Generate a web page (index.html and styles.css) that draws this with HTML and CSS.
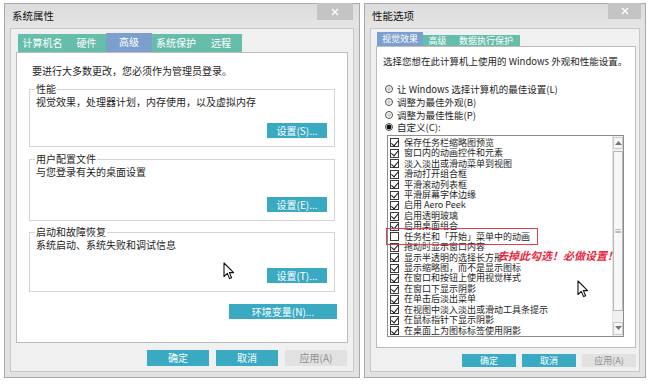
FILE: index.html
```html
<!DOCTYPE html>
<html lang="zh-CN">
<head>
<meta charset="utf-8">
<title>系统属性 / 性能选项</title>
<link rel="stylesheet" href="styles.css">
</head>
<body>
<div class="desk">
  <section class="win win-sys">
    <header class="titlebar">
      <span class="title">系统属性</span>
      <span class="close close-sys"><svg width="8" height="8" viewBox="0 0 8 8"><path d="M1 1L7 7M7 1L1 7" stroke="#fff" stroke-width="1.4"/></svg></span>
    </header>
    <div class="client">
      <nav class="tabs">
        <span class="tab t49">计算机名</span>
        <span class="tab t39">硬件</span>
        <span class="tab on t46">高级</span>
        <span class="tab t48">系统保护</span>
        <span class="tab t42">远程</span>
      </nav>
      <div class="panel panel-sys">
        <p class="intro">要进行大多数更改，您必须作为管理员登录。</p>
        <fieldset class="group first">
          <legend>性能</legend>
          <p class="desc">视觉效果，处理器计划，内存使用，以及虚拟内存</p>
          <div class="row-end"><button class="btn btn-set">设置(S)...</button></div>
        </fieldset>
        <fieldset class="group second">
          <legend>用户配置文件</legend>
          <p class="desc">与您登录有关的桌面设置</p>
          <div class="row-end"><button class="btn btn-set">设置(E)...</button></div>
        </fieldset>
        <fieldset class="group third">
          <legend>启动和故障恢复</legend>
          <p class="desc">系统启动、系统失败和调试信息</p>
          <div class="row-end"><button class="btn btn-set">设置(T)...</button></div>
        </fieldset>
        <div class="row-end env-row"><button class="btn btn-env">环境变量(N)...</button></div>
      </div>
      <div class="actions actions-sys">
        <button class="btn act">确定</button>
        <button class="btn act">取消</button>
        <button class="btn act off">应用(A)</button>
      </div>
    </div>
  </section>

  <section class="win win-perf">
    <header class="titlebar">
      <span class="title">性能选项</span>
      <span class="close close-perf"><svg width="8" height="8" viewBox="0 0 8 8"><path d="M1 1L7 7M7 1L1 7" stroke="#fff" stroke-width="1.4"/></svg></span>
    </header>
    <div class="client">
      <nav class="tabs">
        <span class="tab on p46">视觉效果</span>
        <span class="tab p29">高级</span>
        <span class="tab p68">数据执行保护</span>
      </nav>
      <div class="panel panel-perf">
        <p class="intro2">选择您想在此计算机上使用的 Windows 外观和性能设置。</p>
        <div class="radios">
          <div class="radio-row"><span class="radio"></span>让 Windows 选择计算机的最佳设置(L)</div>
          <div class="radio-row"><span class="radio"></span>调整为最佳外观(B)</div>
          <div class="radio-row"><span class="radio"></span>调整为最佳性能(P)</div>
          <div class="radio-row"><span class="radio sel"></span>自定义(C):</div>
        </div>
        <div class="listbox">
          <ul class="items">
            <li><span class="cb on"></span>保存任务栏缩略图预览</li>
            <li><span class="cb on"></span>窗口内的动画控件和元素</li>
            <li><span class="cb on"></span>淡入淡出或滑动菜单到视图</li>
            <li><span class="cb on"></span>滑动打开组合框</li>
            <li><span class="cb on"></span>平滑滚动列表框</li>
            <li><span class="cb on"></span>平滑屏幕字体边缘</li>
            <li><span class="cb on"></span>启用 Aero Peek</li>
            <li><span class="cb on"></span>启用透明玻璃</li>
            <li><span class="cb on"></span>启用桌面组合</li>
            <li><span class="cb"></span>任务栏和「开始」菜单中的动画</li>
            <li><span class="cb on"></span>拖动时显示窗口内容</li>
            <li><span class="cb on"></span>显示半透明的选择长方形</li>
            <li><span class="cb on"></span>显示缩略图，而不是显示图标</li>
            <li><span class="cb on"></span>在窗口和按钮上使用视觉样式</li>
            <li><span class="cb on"></span>在窗口下显示阴影</li>
            <li><span class="cb on"></span>在单击后淡出菜单</li>
            <li><span class="cb on"></span>在视图中淡入淡出或滑动工具条提示</li>
            <li><span class="cb on"></span>在鼠标指针下显示阴影</li>
            <li><span class="cb on"></span>在桌面上为图标标签使用阴影</li>
          </ul>
          <div class="scrollbar">
            <span class="sb-arrow up"><svg width="7" height="4" viewBox="0 0 7 4"><path d="M0 4L3.5 0L7 4Z" fill="#777"/></svg></span>
            <span class="sb-thumb">≡</span>
            <span class="sb-space"></span>
            <span class="sb-arrow down"><svg width="7" height="4" viewBox="0 0 7 4"><path d="M0 0L3.5 4L7 0Z" fill="#777"/></svg></span>
          </div>
          <span class="mark-box"></span>
          <span class="mark-note">去掉此勾选！必做设置！</span>
        </div>
      </div>
      <div class="actions actions-perf">
        <button class="btn act2">确定</button>
        <button class="btn act2">取消</button>
        <button class="btn act2 off">应用(A)</button>
      </div>
    </div>
  </section>

  <svg class="cursor cur-left" width="12" height="18" viewBox="0 0 12 18"><path d="M1 1L1 14.5L4.3 11.4L6.6 16.6L8.6 15.7L6.4 10.6L10.6 10.6Z" fill="#fff" stroke="#111" stroke-width="1.1" stroke-linejoin="round"/></svg>
  <svg class="cursor cur-right" width="12" height="18" viewBox="0 0 12 18"><path d="M1 1L1 14.5L4.3 11.4L6.6 16.6L8.6 15.7L6.4 10.6L10.6 10.6Z" fill="#fff" stroke="#111" stroke-width="1.1" stroke-linejoin="round"/></svg>
</div>
</body>
</html>
```

FILE: styles.css
```css
* { box-sizing: border-box; }
html, body { margin: 0; padding: 0; }
body {
  background: #fff;
  font-family: "Noto Sans CJK SC", "Noto Sans", sans-serif;
  color: #1e1e1e;
  width: 651px;
  height: 385px;
  overflow: hidden;
}
p { margin: 0; }

.desk {
  position: relative;
  display: flex;
  align-items: flex-start;
  gap: 4px;
  padding: 3px 0 0 4px;
  height: 385px;
}

.win {
  display: flex;
  flex-direction: column;
  height: 375px;
  border: 1px solid #a9a9a9;
  background: #e2e2e2;
}
.win-sys { width: 356px; }
.win-perf { width: 282px; }

.titlebar {
  flex: none;
  height: 24px;
  display: flex;
  justify-content: space-between;
  align-items: flex-start;
  padding-left: 7px;
  background: linear-gradient(#dcdcdc, #e5e5e5);
}
.title {
  align-self: center;
  font-size: 10.5px;
  line-height: 14px;
  color: #111;
}
.close {
  display: flex;
  align-items: center;
  justify-content: center;
  margin-top: -1px;
  background: #c4c4c4;
}
.close-sys { width: 36px; height: 17px; margin-right: 6px; }
.close-perf { width: 33px; height: 16px; margin-right: 4px; }

.client {
  flex: 1;
  display: flex;
  flex-direction: column;
  margin: 0 5px 5px;
  border: 1px solid #c8c8c8;
  background: #f0f0f0;
}
.win-sys .client { padding: 4px 0 5px; }
.win-perf .client { padding: 3px 0 4px; }

.tabs {
  display: flex;
  align-items: flex-end;
  flex: none;
}
.win-sys .tabs { height: 19px; padding-left: 7px; }
.win-perf .tabs { height: 14px; padding-left: 6px; }

.tab {
  background: #66bdaa;
  color: #fff;
  text-align: center;
  white-space: nowrap;
}
.tab.on { background: #7c9fcd; }
.win-sys .tab { height: 18px; font-size: 10px; line-height: 18px; }
.win-sys .tab.on { height: 19px; line-height: 18px; }
.win-perf .tab { height: 11px; font-size: 9px; line-height: 11px; }
.win-perf .tab.on { height: 14px; line-height: 13px; }
.t49 { width: 49px; }
.t39 { width: 39px; }
.t46 { width: 46px; }
.t48 { width: 48px; }
.t42 { width: 42px; }
.p46 { width: 46px; }
.p29 { width: 29px; }
.p68 { width: 68px; }

.panel {
  flex: none;
  background: #fff;
  border: 1px solid #bcbcbc;
}
.panel-sys {
  height: 291px;
  margin: 0 5px;
  padding: 12px 12px 0 12px;
}
.panel-perf {
  height: 302px;
  margin: 0 3px 0 5px;
  padding: 8px 0 0 6px;
  position: relative;
}

.intro {
  padding-left: 3px;
  font-size: 10px;
  line-height: 12px;
}

.group {
  margin: 7px 0 0;
  padding: 0 7px 8px 6px;
  border: 1px solid #d4d4d4;
  min-width: 0;
}
.group.third { margin-top: 6px; }
.group legend {
  padding: 0 1px;
  margin-left: -1px;
  font-size: 10px;
  line-height: 10px;
}
.desc {
  padding-top: 2px;
  font-size: 10px;
  line-height: 12px;
}
.row-end {
  display: flex;
  justify-content: flex-end;
}
.group.first .row-end { margin-top: 15px; }
.group.second .row-end { margin-top: 19px; }
.group.third .row-end { margin-top: 17px; }
.env-row { margin-top: 12px; margin-right: -2px; }

.btn {
  border: none;
  padding: 0;
  margin: 0;
  background: #3aaac3;
  color: #fff;
  font-family: inherit;
  text-align: center;
  white-space: nowrap;
}
.btn-set { width: 60px; height: 15px; font-size: 10px; line-height: 15px; }
.btn-env { width: 108px; height: 15px; font-size: 10px; line-height: 15px; }

.actions {
  display: flex;
  justify-content: flex-end;
  flex: none;
}
.actions-sys { margin-top: 7px; padding-right: 6px; gap: 7px; }
.actions-perf { margin-top: 6px; padding-right: 3px; gap: 6px; }
.act { width: 62px; height: 16px; font-size: 10px; line-height: 16px; }
.act2 { width: 54px; height: 13px; font-size: 9px; line-height: 13px; }
.btn.off { background: #e1e1e1; color: #8e8e8e; }

/* performance options */
.intro2 {
  font-size: 9.5px;
  line-height: 12px;
}
.radios {
  margin-top: 16px;
  padding-left: 2px;
}
.radio-row {
  display: flex;
  align-items: center;
  height: 12.7px;
  font-size: 9.5px;
  line-height: 12px;
  white-space: nowrap;
}
.radio {
  width: 8px;
  height: 8px;
  margin-right: 4px;
  border-radius: 50%;
  border: 1.5px solid #4d4d4d;
  background: radial-gradient(circle, #cfcfcf 0 1.5px, #fff 2px);
  flex: none;
}
.radio.sel { background: radial-gradient(circle, #111 0 2.2px, #fff 2.7px); }

.listbox {
  position: relative;
  display: flex;
  width: 237px;
  height: 202px;
  margin: 1px 0 0 4px;
  border: 1px solid #8a8d93;
  background: #fff;
}
.items {
  flex: 1;
  list-style: none;
  margin: 0;
  padding: 2px 0 0 2px;
}
.items li {
  display: flex;
  align-items: center;
  height: 10.45px;
  font-size: 9px;
  line-height: 10.45px;
  white-space: nowrap;
}
.cb {
  position: relative;
  flex: none;
  width: 9px;
  height: 9px;
  margin-right: 5px;
  border: 1px solid #3a3a3a;
  background: #fff;
}
.cb.on::after {
  content: "";
  position: absolute;
  left: 2px;
  top: -0.5px;
  width: 3px;
  height: 5.5px;
  border: solid #111;
  border-width: 0 1.6px 1.6px 0;
  transform: rotate(40deg);
}

.scrollbar {
  flex: none;
  width: 11px;
  display: flex;
  flex-direction: column;
  background: #f0f0f0;
  border-left: 1px solid #e4e4e4;
  padding: 1px 0;
}
.sb-arrow {
  display: flex;
  align-items: center;
  justify-content: center;
  border: 1px solid #c9c9c9;
  background: #f6f6f6;
}
.sb-arrow.up { height: 12px; }
.sb-arrow.down { height: 13px; }
.sb-thumb {
  margin-top: 2px;
  height: 160px;
  border: 1px solid #b8b8b8;
  background: #f7f7f7;
  display: flex;
  align-items: center;
  justify-content: center;
  font-size: 8px;
  line-height: 8px;
  color: #888;
}
.sb-space { flex: 1; }

.mark-box {
  position: absolute;
  left: -2px;
  top: 92px;
  width: 152px;
  height: 17px;
  border: 1px solid #d8434f;
}
.mark-note {
  position: absolute;
  left: 109px;
  top: 113px;
  font-size: 11px;
  line-height: 13px;
  font-weight: bold;
  font-style: italic;
  color: #e8283c;
  white-space: nowrap;
}

.cursor { position: absolute; }
.cur-left { left: 223px; top: 262px; }
.cur-right { left: 577px; top: 280px; }
```
